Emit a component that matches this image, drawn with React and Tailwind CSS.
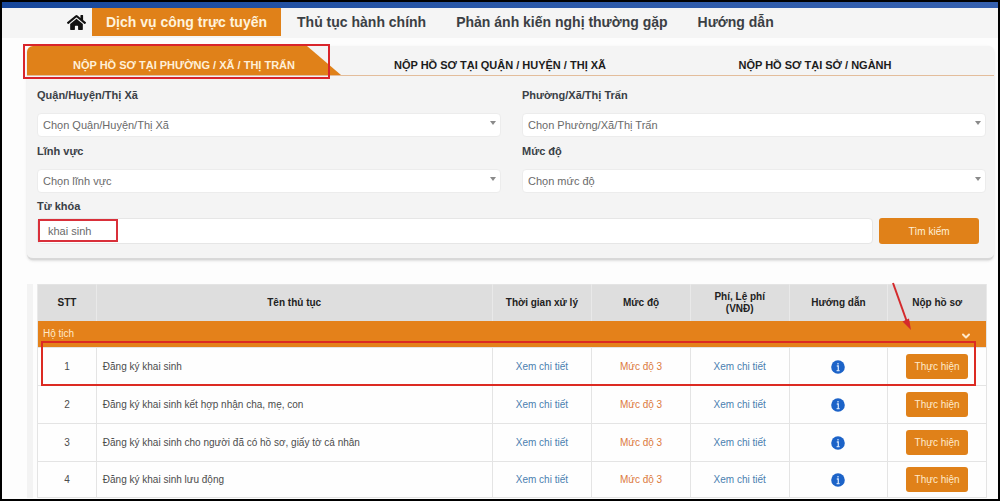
import React, { useState } from "react";
import { FaHome } from "react-icons/fa";
import { ChevronDown } from "lucide-react";

const NAV_LINKS = ["Thủ tục hành chính", "Phản ánh kiến nghị thường gặp", "Hướng dẫn"];

const PROCEDURES = [
  "Đăng ký khai sinh",
  "Đăng ký khai sinh kết hợp nhận cha, mẹ, con",
  "Đăng ký khai sinh cho người đã có hồ sơ, giấy tờ cá nhân",
  "Đăng ký khai sinh lưu động",
];

const Header = () => (
  <header>
    <div className="h-[6px] bg-gradient-to-r from-[#17479b] via-[#2a58a8] to-[#3560ae]" />
    <nav className="flex h-[30px] items-start bg-[#f5f5f5] pl-[65px] text-[14px] font-bold leading-[29px] text-[#3b4044]">
      <a href="#home" aria-label="Trang chủ" className="flex h-[28px] w-[25px] items-center text-[#111]">
        <FaHome size={19} />
      </a>
      <a href="#services" className="h-[28px] bg-[#e08119] px-[14px] text-[#fff3dc]">
        Dịch vụ công trực tuyến
      </a>
      {NAV_LINKS.map((label) => (
        <a key={label} href="#nav" className="pl-[16px] pr-[14px]">
          {label}
        </a>
      ))}
    </nav>
  </header>
);

const Tabs = () => (
  <div role="tablist" className="grid h-[30px] grid-cols-[314fr_318fr_312fr_23fr] border-b border-[#e3bd9b] text-[11px] font-bold text-[#1c1c1c]">
    <div className="relative flex">
      <button
        role="tab"
        aria-selected="true"
        className="flex-1 rounded-tl-md bg-[#e08119] pt-[10px] text-[#fff0d8] [clip-path:polygon(0_0,calc(100%-34px)_0,100%_100%,0_100%)]"
      >
        NỘP HỒ SƠ TẠI PHƯỜNG / XÃ / THỊ TRẤN
      </button>
      <div className="pointer-events-none absolute -left-[4px] -top-[2px] right-[11px] h-[35px] border-2 border-[#d9252b]" />
    </div>
    <button role="tab" aria-selected="false" className="pt-[10px]">
      NỘP HỒ SƠ TẠI QUẬN / HUYỆN / THỊ XÃ
    </button>
    <button role="tab" aria-selected="false" className="pt-[10px]">
      NỘP HỒ SƠ TẠI SỞ / NGÀNH
    </button>
  </div>
);

const SelectField = ({ id, label, placeholder }) => (
  <div>
    <label htmlFor={id} className="block h-[26px] text-[11px] font-bold leading-[16px] text-[#3a4046]">
      {label}
    </label>
    <div className="relative">
      <select
        id={id}
        className="block h-[24px] w-full appearance-none rounded-sm border border-[#ececec] bg-white pl-[5px] text-[11px] text-[#6a6a6a]"
      >
        <option>{placeholder}</option>
      </select>
      <svg viewBox="0 0 6 4" className="pointer-events-none absolute right-[5px] top-[8px] h-[4px] w-[6px] fill-[#8a8a8a]">
        <path d="M0 0h6L3 4z" />
      </svg>
    </div>
  </div>
);

const SearchForm = () => {
  const [keyword, setKeyword] = useState("khai sinh");

  return (
    <form onSubmit={(e) => e.preventDefault()} className="pb-[14px] pl-[10px] pr-[8px] pt-[11px]">
      <div className="grid grid-cols-2 gap-x-[21px] gap-y-[6px]">
        <SelectField id="district" label="Quận/Huyện/Thị Xã" placeholder="Chọn Quận/Huyện/Thị Xã" />
        <SelectField id="ward" label="Phường/Xã/Thị Trấn" placeholder="Chọn Phường/Xã/Thị Trấn" />
        <SelectField id="field" label="Lĩnh vực" placeholder="Chọn lĩnh vực" />
        <SelectField id="level" label="Mức độ" placeholder="Chọn mức độ" />
      </div>
      <label htmlFor="keyword" className="mt-[5px] block h-[20px] text-[11px] font-bold leading-[16px] text-[#3a4046]">
        Từ khóa
      </label>
      <div className="flex gap-[6px] pr-[7px]">
        <div className="relative flex-1">
          <input
            id="keyword"
            value={keyword}
            onChange={(e) => setKeyword(e.target.value)}
            className="block h-[26px] w-full rounded-sm border border-[#e6e6e6] bg-white pl-[10px] text-[11px] text-[#6a6a6a]"
          />
          <div className="pointer-events-none absolute left-px top-px h-[23px] w-[80px] border-2 border-[#d9303a]" />
        </div>
        <button type="submit" className="h-[26px] w-[100px] rounded-[3px] bg-[#e08119] text-[10px] text-[#fff0d8]">
          Tìm kiếm
        </button>
      </div>
    </form>
  );
};

const InfoIcon = () => (
  <svg viewBox="0 0 14 14" className="mx-auto h-[14px] w-[14px]">
    <circle cx="7" cy="7" r="6.8" fill="#1c63c8" />
    <path d="M7 3v1.6M5.8 6H7.3v4.4M5.6 10.6h3" stroke="#cfe2fb" strokeWidth="1.3" fill="none" />
  </svg>
);

const ProcedureTable = () => (
  <div className="relative ml-[4px]">
    <table className="w-full table-fixed border-collapse border border-[#e4e4e4] bg-[#fefefe] text-center text-[10px] text-[#4c4c4c]">
      <colgroup>
        <col className="w-[6.2%]" />
        <col className="w-[41.7%]" />
        <col className="w-[10.5%]" />
        <col className="w-[10.4%]" />
        <col className="w-[10.4%]" />
        <col className="w-[10.4%]" />
        <col className="w-[10.4%]" />
      </colgroup>
      <thead>
        <tr className="h-[36px] bg-[#dedede] leading-[12px] text-[#222] *:border-x *:border-[#e9e9e9]">
          <th>STT</th>
          <th>Tên thủ tục</th>
          <th>Thời gian xử lý</th>
          <th>Mức độ</th>
          <th>
            Phí, Lệ phí
            <br />
            (VNĐ)
          </th>
          <th>Hướng dẫn</th>
          <th>Nộp hồ sơ</th>
        </tr>
      </thead>
      <tbody>
        <tr className="h-[27px] bg-[#e4811a] text-[#ffe9c9]">
          <td colSpan={7}>
            <button className="flex w-full items-center justify-between pl-[5px] pr-[14px]">
              Hộ tịch
              <ChevronDown size={12} strokeWidth={4} className="mt-[4px]" />
            </button>
          </td>
        </tr>
        {PROCEDURES.map((name, idx) => (
          <tr key={name} className="h-[38px] *:border *:border-[#e4e4e4] last:h-[36px]">
            <td>{idx + 1}</td>
            <td className="pl-[6px] text-left">{name}</td>
            <td>
              <a href="#detail" className="text-[#4a80b0]">Xem chi tiết</a>
            </td>
            <td className="text-[#dc7a3e]">Mức độ 3</td>
            <td>
              <a href="#fee" className="text-[#4a80b0]">Xem chi tiết</a>
            </td>
            <td>
              <a href="#guide" aria-label="Hướng dẫn">
                <InfoIcon />
              </a>
            </td>
            <td>
              <button className="h-[25px] w-[62px] rounded-[3px] bg-[#e08119] text-[#ffeacb]">
                Thực hiện
              </button>
            </td>
          </tr>
        ))}
      </tbody>
    </table>

    {/* Highlight around the first procedure and pointer to its button */}
    <div className="pointer-events-none absolute left-[4px] right-[11px] top-[57px] h-[45px] border-2 border-[#dc2a22]" />
    <svg viewBox="0 0 22 50" className="pointer-events-none absolute -top-[2px] right-[74px] h-[50px] w-[22px]">
      <path d="M2 1L16 40" stroke="#d42a2c" strokeWidth="2" />
      <path d="M20 48L11.500 39.500L18 36.500Z" fill="#d42a2c" />
    </svg>
  </div>
);

const App = () => (
  <div className="min-h-screen border-2 border-black bg-[#fdfdfd] font-['Liberation_Sans',Arial,sans-serif]">
    <Header />
    <main className="pl-[25px] pr-[4px] pt-[8px]">
      <section className="rounded-md border-b-2 border-[#d8d8d8] bg-[#f4f4f4] shadow-sm">
        <Tabs />
        <SearchForm />
      </section>
      <section className="mr-[7px] mt-[24px] border-l-[6px] border-[#f3f3f3]">
        <ProcedureTable />
      </section>
    </main>
  </div>
);

export default App;
